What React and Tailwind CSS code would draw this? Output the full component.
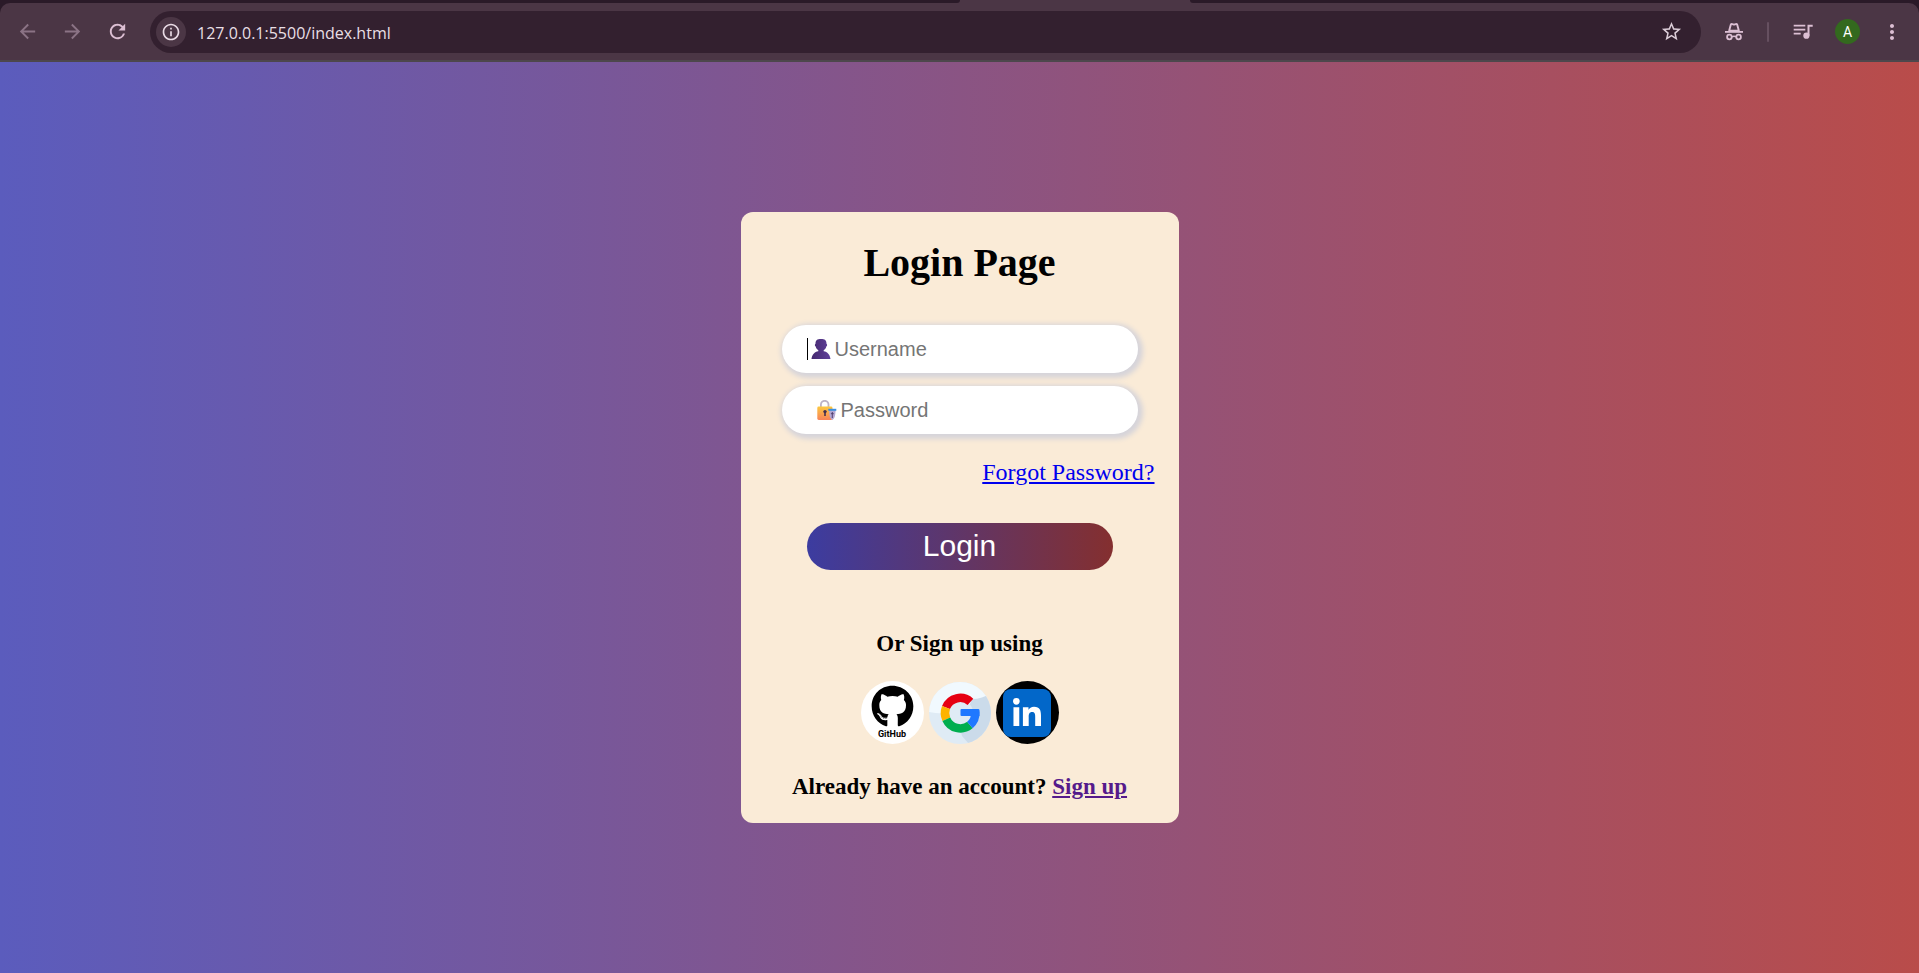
import React from "react";
import {
  MdArrowBack,
  MdArrowForward,
  MdRefresh,
  MdOutlineInfo,
  MdStarBorder,
  MdMoreVert,
} from "react-icons/md";
import { FaGithub, FaLinkedinIn } from "react-icons/fa";

function IncognitoIcon() {
  return (
    <svg viewBox="0 0 18 18" className="size-[18px]" fill="none" aria-hidden="true">
      <path d="M4.2 7.6 5.7 1.9c.2-.7.8-1 1.5-.8l1.8.6 1.8-.6c.7-.2 1.3.1 1.5.8l1.5 5.7z" stroke="currentColor" strokeWidth="1.9" strokeLinejoin="round" />
      <path d="M0 8h18v1.8H0z" fill="currentColor" />
      <circle cx="4.4" cy="14" r="2.3" stroke="currentColor" strokeWidth="1.8" />
      <circle cx="13.6" cy="14" r="2.3" stroke="currentColor" strokeWidth="1.8" />
      <path d="M6.7 13.8Q9 12.6 11.3 13.8" stroke="currentColor" strokeWidth="1.6" />
    </svg>
  );
}

function MediaIcon() {
  return (
    <svg viewBox="0 0 20 20" className="size-5" fill="currentColor" aria-hidden="true">
      <path d="M.7 2.800h11.600v1.800H.7zM.7 6.800h11.600v1.800H.7zM.7 10.800h7v1.800h-7z" />
      <path d="M14.500 2.800h5.200v2h-3.200v9h-2z" />
      <circle cx="13.400" cy="13.700" r="3.100" />
    </svg>
  );
}

function UserGlyph() {
  return (
    <svg viewBox="0 0 20 20" className="size-5 shrink-0" aria-hidden="true">
      <defs>
        <linearGradient id="user-fill" x1="0" y1="0" x2="1" y2="0">
          <stop offset="0" stopColor="#45296f" />
          <stop offset="1" stopColor="#60409a" />
        </linearGradient>
      </defs>
      <path
        d="M10 0c3.900 0 5.500 1.300 5.500 4.800l.2.200c.6.200.6 2.300-.4 2.600-.3 1.800-1.400 3-2.600 3.700v.9c3.700.7 6.200 3.200 6.800 7.800H.5c.6-4.600 3.100-7.100 6.800-7.800v-.9C6.100 10.600 5 9.400 4.700 7.600c-1-.3-1-2.400-.4-2.600l.2-.2C4.500 1.300 6.100 0 10 0z"
        fill="url(#user-fill)"
      />
    </svg>
  );
}

function LockGlyph() {
  return (
    <svg viewBox="0 0 20 20" className="size-5 shrink-0" aria-hidden="true">
      <defs>
        <linearGradient id="lock-fill" x1="0" y1="0" x2="0" y2="1">
          <stop offset="0" stopColor="#fcc83f" />
          <stop offset="1" stopColor="#f8835a" />
        </linearGradient>
      </defs>
      <path d="M3.900 8V4.600a3.800 3.800 0 0 1 7.600 0V8" fill="none" stroke="#bdb3c6" strokeWidth="1.800" />
      <rect x="0.300" y="6.500" width="15.200" height="13.500" rx="1.400" fill="url(#lock-fill)" />
      <circle cx="8" cy="11.600" r="1.700" fill="#43304f" />
      <path d="M7.200 12h1.600v4H7.200z" fill="#43304f" />
      <path d="M11.900 10.200h6.800l-.5 4.300c-.2 2.500-1.200 4.400-2.900 5.500-1.700-1.100-2.700-3-2.900-5.500z" fill="#b5a8d3" />
      <path d="M11.300 8.800h8v2h-8z" fill="#3a8fe0" />
      <path d="M14.800 12h1v6h-1z" fill="#52406f" />
      <path d="M13.900 13.200h2.800v1h-2.800z" fill="#52406f" />
    </svg>
  );
}

function GoogleGlyph() {
  return (
    <svg viewBox="0 0 62 62" className="size-[62px]" aria-hidden="true">
      <defs>
        <clipPath id="google-clip">
          <circle cx="31" cy="31" r="31" />
        </clipPath>
      </defs>
      <g clipPath="url(#google-clip)">
        <path d="M0 0h62v62H0z" fill="#dfebf5" />
        <path d="M0 0h62v13C59 14 56 16 52 18 46 28 20 34 0 30z" fill="#f1f9fe" />
        <path d="M43 17C50 17 56 15 62 11v51H40L33 54 31 46z" fill="#cbdbea" />
        <circle cx="31" cy="31" r="13" fill="#dfebf5" />
      </g>
      <g fill="none" strokeWidth="8.500">
        <path d="M17 25.500A15.300 15.300 0 0 1 41.400 19.800" stroke="#e60012" />
        <path d="M17.300 37.200A15.300 15.300 0 0 1 17 25.500" stroke="#fdb300" />
        <path d="M40.900 43A15.300 15.300 0 0 1 17.300 37.200" stroke="#00ae4f" />
        <path d="M46.200 30A15.300 15.300 0 0 1 40.900 43" stroke="#1f78ff" />
      </g>
      <path d="M32.500 27H49.500q1 0 1 1.500V34H32.500q-1 0-1-1v-5q0-1 1-1z" fill="#1f78ff" />
    </svg>
  );
}

function BrowserBar() {
  return (
    <header className="bg-[#2a1a28] font-['Open_Sans','Noto_Sans',sans-serif]">
      <div className="flex h-[3px] bg-[#4b3645]">
        <div className="w-1/2 rounded-br-[3px] bg-[#2a1a28]" />
        <div className="w-[230px]" />
        <div className="flex-1 rounded-bl-[3px] bg-[#2a1a28]" />
      </div>
      <div className="flex h-[59px] items-center rounded-t-[10px] border-b-2 border-[#4d474c] bg-[#4b3645] pl-4 pr-[15px] text-[#dcbfd3]">
        <nav className="flex items-center gap-[22px] text-[#8b7385]">
          <button type="button" aria-label="Back">
            <MdArrowBack className="size-[23px]" />
          </button>
          <button type="button" aria-label="Forward">
            <MdArrowForward className="size-[23px]" />
          </button>
          <button type="button" aria-label="Reload" className="text-[#dcbfd3]">
            <MdRefresh className="size-[23px]" />
          </button>
        </nav>
        <div className="ml-[21px] flex h-[42px] min-w-0 flex-1 items-center rounded-full bg-[#33202f] pl-1.5 pr-[18px]">
          <button
            type="button"
            aria-label="View site information"
            className="flex size-[30px] items-center justify-center rounded-full bg-[#4b3645] text-[#e9dbe5]"
          >
            <MdOutlineInfo className="size-5" />
          </button>
          <input
            type="text"
            aria-label="Address"
            defaultValue="127.0.0.1:5500/index.html"
            className="ml-[11px] min-w-0 flex-1 bg-transparent pt-0.5 text-base text-[#e8dfe5] outline-none"
          />
          <button type="button" aria-label="Bookmark this page" className="text-[#dccdd8]">
            <MdStarBorder className="size-[23px]" />
          </button>
        </div>
        <div className="ml-6 flex items-center">
          <button type="button" aria-label="Incognito">
            <IncognitoIcon />
          </button>
          <span className="ml-6 h-5 w-0.5 rounded-full bg-[#665060]" />
          <button type="button" aria-label="Media controls" className="ml-6">
            <MediaIcon />
          </button>
          <button
            type="button"
            aria-label="Profile"
            className="ml-[22px] flex size-[25px] items-center justify-center rounded-full bg-[#33691e] font-['Roboto',sans-serif] text-sm text-white"
          >
            A
          </button>
          <button type="button" aria-label="Menu" className="ml-5">
            <MdMoreVert className="size-6" />
          </button>
        </div>
      </div>
    </header>
  );
}

const fieldClass =
  "mx-[17px] flex h-12 items-center rounded-full bg-white shadow-[2px_2px_5px_3px_#d6d4da] font-['Liberation_Sans',Arial,sans-serif] text-xl";
const inputClass =
  "ml-1 min-w-0 flex-1 bg-transparent pr-6 text-black outline-none placeholder:text-[#757575]";

function LoginCard() {
  return (
    <form
      onSubmit={(e) => e.preventDefault()}
      className="flex w-[438px] flex-col rounded-xl bg-[#faebd7] px-6 pb-[23px] pt-7 font-['Liberation_Serif','Times_New_Roman',serif] text-black"
    >
      <h1 className="text-center text-[40px] font-bold leading-[46px]">Login Page</h1>

      <div className="mt-[39px] flex flex-col gap-[13px]">
        <label className={`${fieldClass} pl-[25px]`}>
          <span className="mr-[3px] h-[22px] w-px bg-black" />
          <UserGlyph />
          <input type="text" aria-label="Username" placeholder="Username" className={inputClass} />
        </label>
        <label className={`${fieldClass} pl-[35px]`}>
          <LockGlyph />
          <input type="password" aria-label="Password" placeholder="Password" className={inputClass} />
        </label>
      </div>

      <a href="#forgot" className="mt-6 self-end text-2xl leading-7 text-[#0000ee] underline">
        Forgot Password?
      </a>

      <button
        type="submit"
        className="mx-[42px] mt-[37px] h-[47px] rounded-full bg-[linear-gradient(90deg,#3c3ca0,#842f2f)] pb-0.5 font-['Liberation_Sans',Arial,sans-serif] text-[30px] leading-9 text-white"
      >
        Login
      </button>

      <h3 className="mt-[60px] text-center text-[23px] font-bold leading-[27px]">Or Sign up using</h3>

      <div className="mt-6 flex items-center justify-center gap-[5px]">
        <a
          href="#github"
          aria-label="GitHub"
          className="flex size-[63px] flex-col items-center rounded-full bg-white pt-1 text-black"
        >
          <FaGithub className="size-[43px]" />
          <span className="font-['Roboto',sans-serif] text-[9px] font-bold leading-[12px]">GitHub</span>
        </a>
        <a href="#google" aria-label="Google">
          <GoogleGlyph />
        </a>
        <a
          href="#linkedin"
          aria-label="LinkedIn"
          className="flex size-[63px] items-center justify-center rounded-full bg-black"
        >
          <span className="flex size-12 items-center justify-center rounded-lg bg-[#0267c9] pt-0.5 text-white">
            <FaLinkedinIn className="size-8" />
          </span>
        </a>
      </div>

      <h3 className="mt-[29px] text-center text-[23px] font-bold leading-[27px]">
        Already have an account?{" "}
        <a href="#signup" className="text-[#551a8b] underline">
          Sign up
        </a>
      </h3>
    </form>
  );
}

export default function App() {
  return (
    <div className="flex min-h-screen flex-col">
      <BrowserBar />
      <main className="flex flex-1 items-center justify-center bg-[linear-gradient(90deg,#5b5cbd,#b94c4a)]">
        <LoginCard />
      </main>
    </div>
  );
}
